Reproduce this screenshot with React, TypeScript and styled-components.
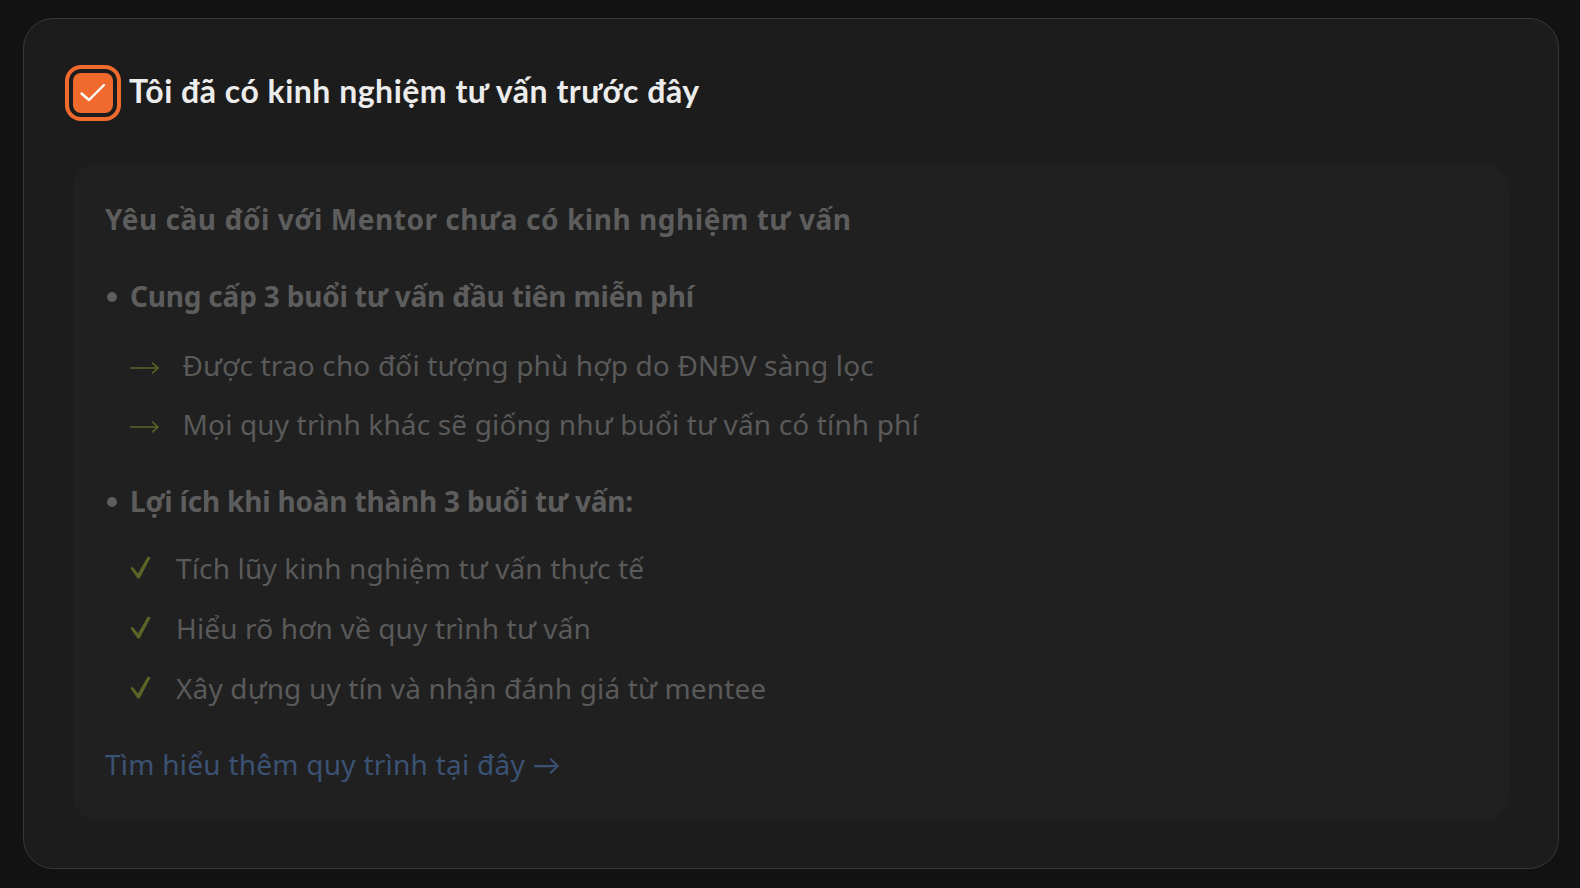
import React from "react";
import styled, { createGlobalStyle } from "styled-components";

const GlobalStyle = createGlobalStyle`
  html, body { margin: 0; padding: 0; background: #121212; }
  body { font-family: "Noto Sans", Lato, sans-serif; -webkit-font-smoothing: antialiased; }
  * { box-sizing: border-box; }
`;

const Page = styled.div`
  min-height: 888px;
  padding: 18px 21px 19px 23px;
`;

const Card = styled.section`
  height: 851px;
  border: 1px solid #383838;
  border-radius: 30px;
  background: #1c1c1c;
  padding: 49px;
`;

const CheckRow = styled.label`
  display: flex;
  align-items: flex-start;
  gap: 16px;
  cursor: pointer;
`;

const Box = styled.span`
  flex: none;
  width: 40px;
  height: 40px;
  margin-top: 4.7px;
  border-radius: 8px;
  background: #f06a2d;
  box-shadow: 0 0 0 4px #1c1c1c, 0 0 0 8px #f06a2d;
  display: flex;
  align-items: center;
  justify-content: center;
`;

const Title = styled.span`
  margin-top: 3.5px;
  font-family: Lato, "Noto Sans", sans-serif;
  font-size: 32px;
  font-weight: 700;
  letter-spacing: 0.5px;
  line-height: 1.2;
  color: #ececec;
`;

const Panel = styled.div`
  margin-top: 51px;
  background: #202020;
  border-radius: 24px;
  padding: 34px 32px 35px;
  display: flex;
  flex-direction: column;
`;

const Heading = styled.h3`
  margin: 0 0 35px;
  font-size: 28px;
  font-weight: 700;
  letter-spacing: 0.55px;
  line-height: 42px;
  color: #5d5d5d;
`;

const Section = styled.div<{ $gapAfter?: number }>`
  margin-bottom: ${(p) => p.$gapAfter ?? 0}px;
`;

const SectionTitle = styled.div`
  display: flex;
  align-items: flex-start;
  font-size: 28px;
  font-weight: 700;
  letter-spacing: -0.2px;
  line-height: 42px;
  color: #5d5d5d;
`;

const Dot = styled.span`
  flex: none;
  width: 10px;
  height: 10px;
  margin: 17px 13px 0 2px;
  border-radius: 50%;
  background: #5d5d5d;
`;

const SubList = styled.ul<{ $gap: number; $top: number }>`
  list-style: none;
  margin: ${(p) => p.$top}px 0 0;
  padding: 0 0 0 25px;
  display: flex;
  flex-direction: column;
  gap: ${(p) => p.$gap}px;
`;

const Item = styled.li<{ $markerGap: number }>`
  display: flex;
  align-items: flex-start;
  gap: ${(p) => p.$markerGap}px;
  font-size: 28px;
  font-weight: 400;
  letter-spacing: 0.15px;
  line-height: 42px;
  color: #5a5a5a;
`;

const Marker = styled.svg<{ $top: number }>`
  flex: none;
  margin-top: ${(p) => p.$top}px;
  color: #5a6628;
`;

const MoreLink = styled.a`
  margin-top: 34px;
  font-size: 28px;
  letter-spacing: 0.25px;
  line-height: 42px;
  color: #3b5274;
  text-decoration: none;
  align-self: flex-start;
`;

const ArrowIcon = () => (
  <Marker $top={18.4} width="29" height="12" viewBox="0 0 29 12" fill="none">
    <path d="M0.5 6 H28 M22.5 1 L28 6 L22.5 11" stroke="currentColor" strokeWidth="1.6" strokeLinecap="round" strokeLinejoin="round" />
  </Marker>
);

const CheckIcon = () => (
  <Marker $top={9.2} width="21" height="23" viewBox="0 0 21 23" fill="none">
    <path d="M0.5 12.3 L2.6 10.8 L8 17.4 L17.8 0.6 L20.6 1.6 L9.6 22.6 L7.6 22.6 Z" fill="currentColor" />
  </Marker>
);

const arrowItems = [
  "Được trao cho đối tượng phù hợp do ĐNĐV sàng lọc",
  "Mọi quy trình khác sẽ giống như buổi tư vấn có tính phí",
];

const checkItems = [
  "Tích lũy kinh nghiệm tư vấn thực tế",
  "Hiểu rõ hơn về quy trình tư vấn",
  "Xây dựng uy tín và nhận đánh giá từ mentee",
];

export default function App() {
  return (
    <>
      <GlobalStyle />
      <Page>
        <Card>
          <CheckRow>
            <Box>
              <svg width="40" height="40" viewBox="0 0 40 40" fill="none">
                <path d="M8.5 20.5 L16 27 L31 12" stroke="#fff" strokeWidth="2.4" strokeLinecap="round" strokeLinejoin="round" />
              </svg>
            </Box>
            <Title>Tôi đã có kinh nghiệm tư vấn trước đây</Title>
          </CheckRow>
          <Panel>
            <Heading>Yêu cầu đối với Mentor chưa có kinh nghiệm tư vấn</Heading>
            <Section $gapAfter={35}>
              <SectionTitle>
                <Dot />
                Cung cấp 3 buổi tư vấn đầu tiên miễn phí
              </SectionTitle>
              <SubList $gap={17} $top={27}>
                {arrowItems.map((t) => (
                  <Item key={t} $markerGap={23.5}>
                    <ArrowIcon />
                    {t}
                  </Item>
                ))}
              </SubList>
            </Section>
            <Section>
              <SectionTitle>
                <Dot />
                Lợi ích khi hoàn thành 3 buổi tư vấn:
              </SectionTitle>
              <SubList $gap={18} $top={25}>
                {checkItems.map((t) => (
                  <Item key={t} $markerGap={25}>
                    <CheckIcon />
                    {t}
                  </Item>
                ))}
              </SubList>
            </Section>
            <MoreLink href="#">Tìm hiểu thêm quy trình tại đây →</MoreLink>
          </Panel>
        </Card>
      </Page>
    </>
  );
}
